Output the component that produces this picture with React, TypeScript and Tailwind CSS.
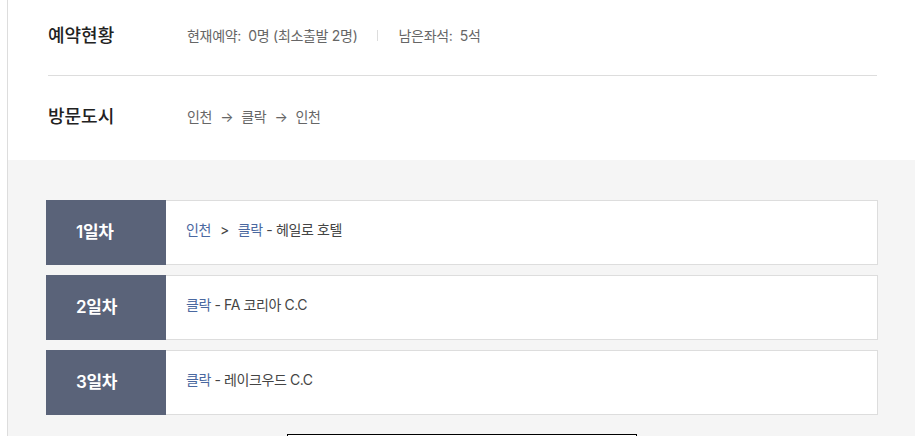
import React from "react";

const font = { fontFamily: 'Inter, "Noto Sans CJK KR", "Noto Sans", sans-serif' };

function DayCard({ day, children }: { day: string; children: React.ReactNode }) {
  return (
    <div className="flex h-[65px]">
      <div className="w-[120px] shrink-0 bg-[#5a6379] flex items-center pl-[30px] text-white text-[17px] font-semibold tracking-[-0.3px]">
        {day}
      </div>
      <div className="flex-1 bg-white border border-l-0 border-[#dddddd] flex items-center pl-[20px] pb-[7px] text-[14px] text-[#444] tracking-[-0.4px]">
        {children}
      </div>
    </div>
  );
}

export default function App() {
  return (
    <div className="w-[915px] h-[436px] overflow-hidden bg-white" style={font}>
      <div className="ml-[7px] border-l border-[#dddddd] h-full flex flex-col">
        <div className="px-[40px] pr-[38px]">
          <div className="h-[76px] flex items-center border-b border-[#dddddd] pb-[5px]">
            <div className="w-[139px] text-[18px] font-medium text-[#222]">예약현황</div>
            <div className="flex items-center text-[14px] text-[#666] tracking-[-0.3px]">
              <span>현재예약:&nbsp; 0명 (최소출발 2명)</span>
              <span className="mx-[20px] h-[11px] w-px bg-[#dddddd]" />
              <span>남은좌석:&nbsp; 5석</span>
            </div>
          </div>
          <div className="h-[84px] flex items-center pb-[4px]">
            <div className="w-[139px] text-[18px] font-medium text-[#222]">방문도시</div>
            <div className="flex items-center text-[14px] text-[#666] gap-[8px] tracking-[-0.3px]">
              <span>인천</span>
              <span>→</span>
              <span>클락</span>
              <span>→</span>
              <span>인천</span>
            </div>
          </div>
        </div>
        <div className="flex-1 bg-[#f5f5f5] pt-[40px] pl-[38px] pr-[37px]">
          <div className="flex flex-col gap-[10px]">
            <DayCard day="1일차">
              <span className="text-[#4a68a0]">인천</span>
              <span className="mx-[9px]">&gt;</span>
              <span className="text-[#4a68a0]">클락</span>
              <span>&nbsp;- 헤일로 호텔</span>
            </DayCard>
            <DayCard day="2일차">
              <span className="text-[#4a68a0]">클락</span>
              <span>&nbsp;- FA 코리아 C.C</span>
            </DayCard>
            <DayCard day="3일차">
              <span className="text-[#4a68a0]">클락</span>
              <span>&nbsp;- 레이크우드 C.C</span>
            </DayCard>
          </div>
          <div className="mt-[19px] mx-auto w-[350px] h-[40px] border border-black bg-white" />
        </div>
      </div>
    </div>
  );
}
